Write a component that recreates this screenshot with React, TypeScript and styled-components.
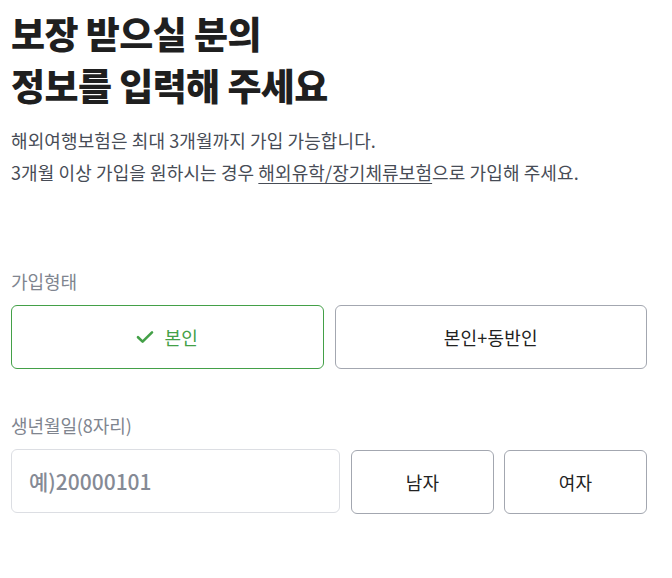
import React, { useState } from 'react'
import styled, { createGlobalStyle } from 'styled-components'

const GlobalStyle = createGlobalStyle`
  * { box-sizing: border-box; }
  body {
    margin: 0;
    background: #ffffff;
    font-family: 'Noto Sans CJK KR', 'Noto Sans', sans-serif;
    color: #222222;
  }
`

const Page = styled.div`
  width: 672px;
  padding: 7px 25px 40px 11px;
`

const Title = styled.h1`
  margin: 0;
  font-size: 37px;
  line-height: 52px;
  font-weight: 800;
  letter-spacing: -0.6px;
  color: #1f1f1f;
`

const Desc = styled.p`
  margin: 13px 0 0 0;
  font-size: 18px;
  line-height: 32px;
  letter-spacing: 0.1px;
  color: #474c56;

  a {
    color: inherit;
    text-decoration: underline;
    text-underline-offset: 3px;
  }
`

const Section = styled.div<{ $top: number }>`
  margin-top: ${(p) => p.$top}px;
`

const Label = styled.div`
  font-size: 18px;
  line-height: 24px;
  color: #80858f;
  letter-spacing: -0.1px;
  margin-bottom: 12px;
`

const Row = styled.div`
  display: flex;
  gap: 11px;
`

const Choice = styled.button<{ $active?: boolean; $width?: number }>`
  flex: ${(p) => (p.$width ? `0 0 ${p.$width}px` : '1 1 0')};
  height: 64px;
  display: flex;
  align-items: center;
  justify-content: center;
  gap: 10px;
  background: #ffffff;
  border: 1px solid ${(p) => (p.$active ? '#43a047' : '#a3a7b0')};
  border-radius: 6px;
  font-family: inherit;
  font-size: 18px;
  letter-spacing: 0.2px;
  color: ${(p) => (p.$active ? '#43a047' : '#222222')};
  cursor: pointer;
  padding: 0;
`

const GenderChoice = styled(Choice)`
  margin-top: 1px;
`

const Input = styled.input`
  flex: 0 0 329px;
  height: 64px;
  border: 1px solid #dcdee3;
  border-radius: 6px;
  padding: 0 17px;
  font-family: inherit;
  font-size: 21px;
  font-weight: 500;
  color: #222;
  outline: none;

  &::placeholder {
    color: #858a95;
  }
`

const BirthRow = styled.div`
  display: flex;
  align-items: flex-start;
  gap: 11px;
`

const GenderGroup = styled.div`
  display: flex;
  gap: 10px;
`

const Check = () => (
  <svg width="18" height="14" viewBox="0 0 18 14" fill="none">
    <path d="M2 7.2 L6.6 11.6 L16 2.4" stroke="#43a047" strokeWidth="2.6" strokeLinecap="round" strokeLinejoin="round" />
  </svg>
)

const App = () => {
  const [type, setType] = useState('self')
  const [gender, setGender] = useState<string | null>(null)

  return (
    <>
      <GlobalStyle />
      <Page>
        <Title>
          보장 받으실 분의
          <br />
          정보를 입력해 주세요
        </Title>
        <Desc>
          해외여행보험은 최대 3개월까지 가입 가능합니다.
          <br />
          3개월 이상 가입을 원하시는 경우 <a href="#">해외유학/장기체류보험</a>으로 가입해 주세요.
        </Desc>

        <Section $top={81}>
          <Label>가입형태</Label>
          <Row>
            <Choice $active={type === 'self'} onClick={() => setType('self')}>
              {type === 'self' && <Check />}
              본인
            </Choice>
            <Choice $active={type === 'with'} onClick={() => setType('with')}>
              {type === 'with' && <Check />}
              본인+동반인
            </Choice>
          </Row>
        </Section>

        <Section $top={44}>
          <Label>생년월일(8자리)</Label>
          <BirthRow>
            <Input placeholder="예)20000101" />
            <GenderGroup>
              <GenderChoice $width={143} $active={gender === 'm'} onClick={() => setGender('m')}>
                남자
              </GenderChoice>
              <GenderChoice $width={143} $active={gender === 'f'} onClick={() => setGender('f')}>
                여자
              </GenderChoice>
            </GenderGroup>
          </BirthRow>
        </Section>
      </Page>
    </>
  )
}

export default App
